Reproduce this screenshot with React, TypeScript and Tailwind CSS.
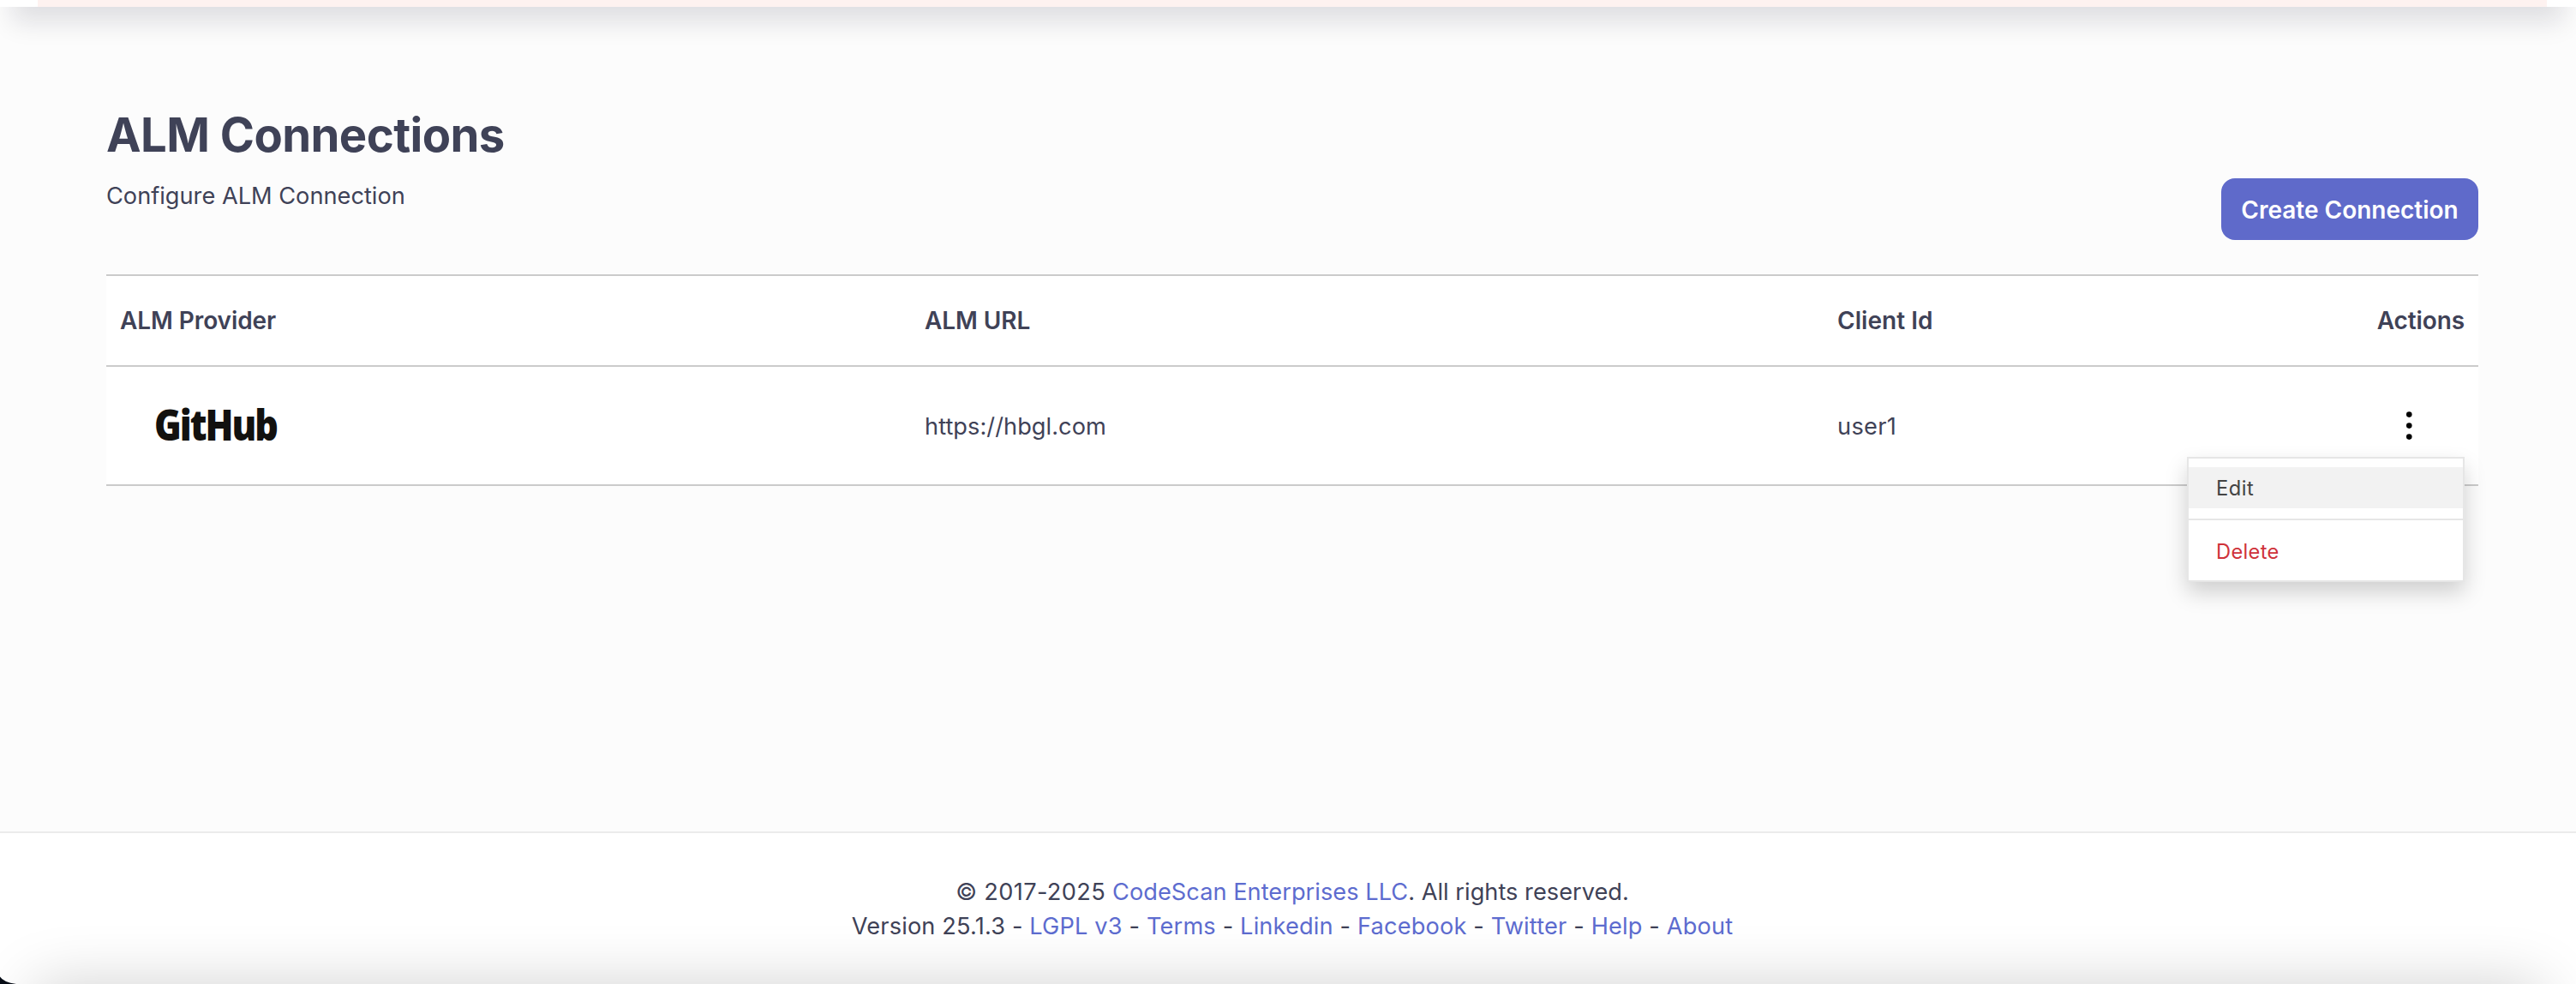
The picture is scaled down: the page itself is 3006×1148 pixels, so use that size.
const links = ["LGPL v3", "Terms", "Linkedin", "Facebook", "Twitter", "Help", "About"];

function ActionMenu() {
  return (
    <div className="absolute top-[53px] -right-[48px] z-20 w-[324px] border-2 border-[#e6e6e6] bg-white py-[10px] text-[23.7px] shadow-[0_12px_24px_rgba(0,0,0,0.18)]">
      <div className="flex h-[48px] items-center bg-[#f2f2f2] pt-[3px] pl-8 tracking-[0.5px] text-[#444]">Edit</div>
      <div className="my-[12px] h-[2px] bg-[#e6e6e6]" />
      <div className="flex h-[48px] items-center pt-[3px] pl-8 tracking-[0.3px] text-[#cf323a]">Delete</div>
    </div>
  );
}

function ConnectionsTable() {
  return (
    <div className="border-y-2 border-[#cbcbcb] bg-white">
      <div className="grid h-[104px] grid-cols-[939px_1064px_1fr] items-center px-4 pb-px text-[28px] font-semibold tracking-[-0.08px]">
        <span>ALM Provider</span>
        <span>ALM URL</span>
        <span className="flex justify-between">
          <span className="pl-px tracking-[0.05px]">Client Id</span>
          <span className="tracking-[-0.1px]">Actions</span>
        </span>
      </div>
      <div className="grid h-[139px] grid-cols-[939px_1064px_1fr_auto] items-center border-t-2 border-[#cbcbcb] px-4 tracking-[0.05px]">
        <span className="-mt-[3px] pl-10">
          <span className="inline-block origin-left scale-x-[0.86] font-['Open_Sans',sans-serif] text-[50px] leading-[60px] font-extrabold tracking-[-2.35px] text-[#12110f]">
            GitHub
          </span>
        </span>
        <span className="pt-[3px]">https://hbgl.com</span>
        <span className="pt-[3px] pl-px tracking-[0.3px]">user1</span>
        <div className="relative mr-[48px]">
          <svg className="block h-[34px] w-[34px]" viewBox="0 0 34 34" fill="#000">
            <circle cx="17.3" cy="3.6" r="3.3" />
            <circle cx="17.3" cy="16.6" r="3.3" />
            <circle cx="17.3" cy="29.6" r="3.3" />
          </svg>
          <ActionMenu />
        </div>
      </div>
    </div>
  );
}

export default function App() {
  return (
    <div className="relative flex h-[1148px] flex-col overflow-hidden bg-[#fcfcfc] font-['Inter',sans-serif] text-[27.2px] leading-[40px] text-[#3f4257]">
      <header className="relative z-10 -mt-[200px] h-[208px] shrink-0 bg-white pr-[34px] pl-[44px] shadow-[0_32px_28px_-14px_rgba(20,20,40,0.12)]">
        <div className="h-full bg-[#fef2f0]" />
      </header>

      <main className="flex-1 px-[124px] pr-[114px] pt-[112px]">
        <div className="flex h-[200px] items-start justify-between">
          <div>
            <h1 className="text-[54.4px] leading-[74px] font-bold tracking-[-0.55px]">ALM Connections</h1>
            <p className="mt-[15px]">Configure ALM Connection</p>
          </div>
          <button className="mt-[88px] flex h-[72px] w-[300px] items-center justify-center rounded-2xl bg-[#5f6aca] pt-px text-[28px] font-semibold text-white">
            Create Connection
          </button>
        </div>
        <ConnectionsTable />
      </main>

      <footer className="h-[178px] shrink-0 border-t-2 border-[#ebebeb] bg-white pt-[49px] pl-[10px] text-center tracking-[0.1px]">
        <p>
          <span className="tracking-[0.35px]">© 2017-2025 </span>
          <a className="tracking-[0.03px] text-[#5d6ccf]">CodeScan Enterprises LLC</a>
          <span className="tracking-[0.02px]">. All rights reserved.</span>
        </p>
        <p className="tracking-[0.15px]">
          Version 25.1.3
          {links.map((label) => (
            <span key={label}>
              {" "}- <a className="text-[#5d6ccf]">{label}</a>
            </span>
          ))}
        </p>
      </footer>

      <div className="relative z-10 mx-[40px] -mb-[200px] h-[200px] shrink-0 shadow-[0_0_70px_rgba(0,0,0,0.18)]" />
      <svg className="absolute bottom-0 left-0 z-20 h-[9px] w-5" viewBox="0 0 20 9" fill="#070d17">
        <path d="M0 0.5 Q4 7 19 9 H0 Z" />
      </svg>
    </div>
  );
}
